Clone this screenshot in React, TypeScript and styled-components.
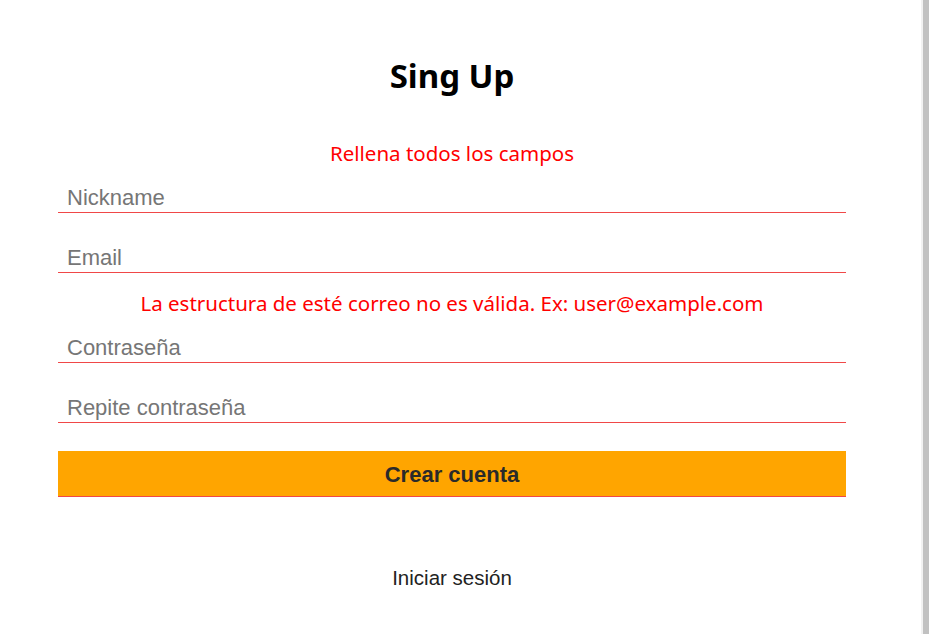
import React from "react";
import styled, { createGlobalStyle } from "styled-components";

const Global = createGlobalStyle`
  html, body { margin: 0; padding: 0; height: 100%; overflow: hidden; background: #fff; }
  #root { height: 100%; }
  * { box-sizing: border-box; }
`;

const Page = styled.div`
  display: flex;
  height: 634px;
  width: 100%;
`;

const Main = styled.main`
  flex: 1;
  min-width: 0;
  padding-top: 52px;
`;

const Scrollbar = styled.div`
  width: 8px;
  flex: none;
  background: #c1c1c1;
  border-left: 2px solid #f1f1f1;
`;

const Form = styled.form`
  width: 788px;
  margin-left: 58px;
  display: flex;
  flex-direction: column;
`;

const Title = styled.h1`
  margin: 0 0 38px;
  font-family: "Noto Sans", "Open Sans", sans-serif;
  font-weight: 700;
  font-size: 33px;
  line-height: 48px;
  height: 48px;
  text-align: center;
  color: #000;
`;

const Message = styled.p`
  margin: 0 0 14px;
  font-family: "Noto Sans", "Open Sans", sans-serif;
  font-size: 20.5px;
  line-height: 30px;
  height: 30px;
  text-align: center;
  color: #ff0000;
`;

const Field = styled.div<{ $gap?: number }>`
  height: 31px;
  margin: 0 0 ${(p) => p.$gap ?? 29}px;
  border-bottom: 1px solid #f04848;
`;

const Input = styled.input`
  display: block;
  width: 100%;
  height: 30px;
  margin: 0;
  padding: 2px 9px 0;
  border: 0;
  outline: none;
  background: transparent;
  font-family: "Liberation Sans", Arial, sans-serif;
  font-size: 22px;
  color: #222;
  &::placeholder { color: #767676; }
`;

const Button = styled.button`
  display: block;
  width: 100%;
  height: 46px;
  margin: 0 0 66px;
  padding: 2px 0 0;
  border: 0;
  background: #ffa500;
  box-shadow: inset 0 -1px 0 #f04848;
  font-family: "Liberation Sans", Arial, sans-serif;
  font-weight: 700;
  font-size: 22px;
  color: #2a2a2a;
`;

const LinkText = styled.a`
  display: block;
  font-family: "Liberation Sans", Arial, sans-serif;
  font-size: 20.5px;
  line-height: 30px;
  text-align: center;
  color: #222;
  text-decoration: none;
`;

export default function App() {
  return (
    <>
      <Global />
      <Page>
        <Main>
          <Form onSubmit={(e) => e.preventDefault()}>
            <Title>Sing Up</Title>
            <Message>Rellena todos los campos</Message>
            <Field>
              <Input type="text" placeholder="Nickname" />
            </Field>
            <Field $gap={15}>
              <Input type="email" placeholder="Email" />
            </Field>
            <Message>La estructura de esté correo no es válida. Ex: user@example.com</Message>
            <Field>
              <Input type="password" placeholder="Contraseña" />
            </Field>
            <Field $gap={28}>
              <Input type="password" placeholder="Repite contraseña" />
            </Field>
            <Button type="submit">Crear cuenta</Button>
            <LinkText href="#">Iniciar sesión</LinkText>
          </Form>
        </Main>
        <Scrollbar />
      </Page>
    </>
  );
}
